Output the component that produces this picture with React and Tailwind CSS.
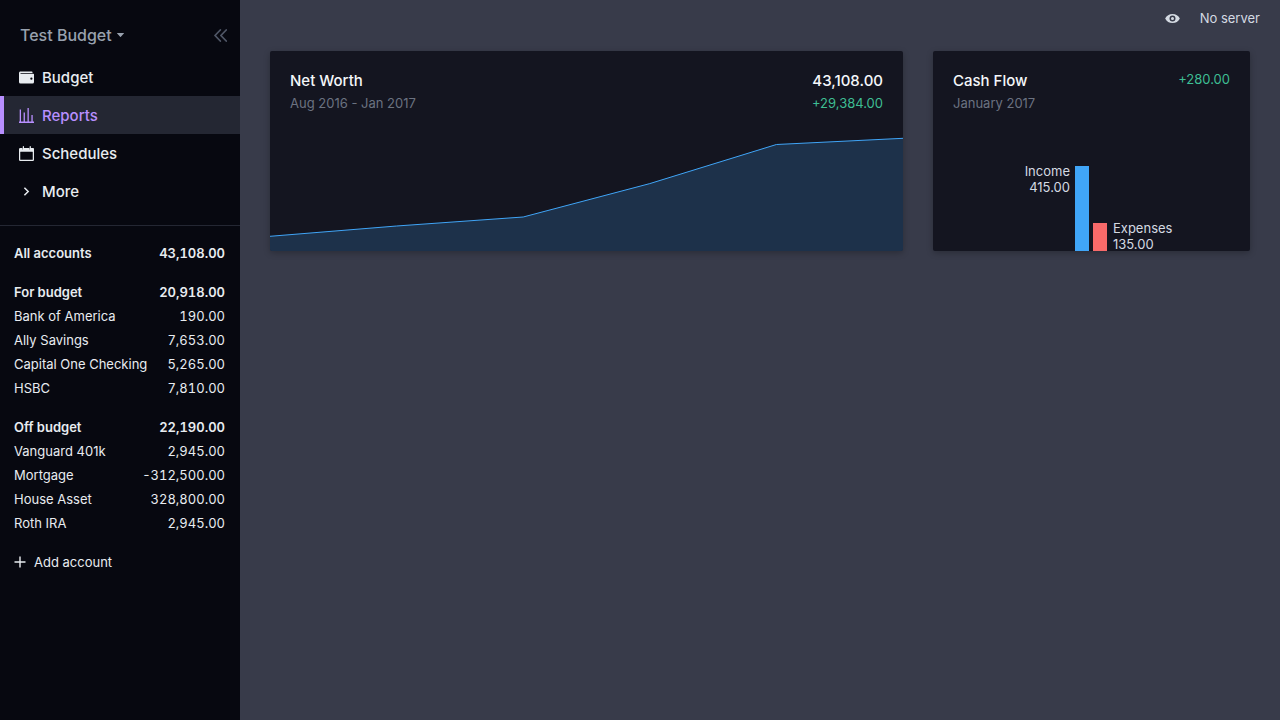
const navItems = [
  { label: 'Budget', icon: WalletIcon },
  { label: 'Reports', icon: ReportsIcon, active: true },
  { label: 'Schedules', icon: CalendarIcon },
  { label: 'More', icon: ChevronIcon },
];

const groups = [
  { name: 'All accounts', total: '43,108.00', accounts: [] },
  {
    name: 'For budget',
    total: '20,918.00',
    accounts: [
      ['Bank of America', '190.00'],
      ['Ally Savings', '7,653.00'],
      ['Capital One Checking', '5,265.00'],
      ['HSBC', '7,810.00'],
    ],
  },
  {
    name: 'Off budget',
    total: '22,190.00',
    accounts: [
      ['Vanguard 401k', '2,945.00'],
      ['Mortgage', '-312,500.00'],
      ['House Asset', '328,800.00'],
      ['Roth IRA', '2,945.00'],
    ],
  },
];

function WalletIcon() {
  return (
    <svg viewBox="0 0 20 20" className="size-[15px]" fill="currentColor">
      <path d="M0 4c0-1.1.9-2 2-2h15a1 1 0 0 1 1 1v1H2v1h17a1 1 0 0 1 1 1v10a2 2 0 0 1-2 2H2a2 2 0 0 1-2-2V4zm16.5 9a1.5 1.5 0 1 0 0-3 1.5 1.5 0 0 0 0 3z" />
    </svg>
  );
}

function ReportsIcon() {
  return (
    <svg viewBox="0 0 15 15" className="size-[15px]" fill="currentColor">
      <path d="M0 13.6h15V15H0zM.7 1.5H2V14H.7zM4.6 4.5h1.3V14H4.6zM8.5 0h1.3v14H8.5zM12.4 7h1.3v7h-1.3z" />
    </svg>
  );
}

function CalendarIcon() {
  return (
    <svg viewBox="0 0 24 24" className="size-[15px]" fill="currentColor">
      <path d="M22.5 3H19V1a1 1 0 0 0-2 0v4.7a.3.3 0 0 1-.5 0V3.500a.5.5 0 0 0-.5-.5H8V1a1 1 0 0 0-2 0v4.700a.3.3 0 0 1-.5 0V3.500A.5.5 0 0 0 5 3H2a2 2 0 0 0-2 2v17a2 2 0 0 0 2 2h20a2 2 0 0 0 2-2V4.500A1.500 1.500 0 0 0 22.500 3zM22 21.500a.5.5 0 0 1-.5.5h-19a.5.5 0 0 1-.5-.5v-12a.5.5 0 0 1 .5-.5h19a.5.5 0 0 1 .5.5z" />
    </svg>
  );
}

function ChevronIcon() {
  return (
    <svg viewBox="0 0 15 15" className="size-[15px]" fill="none" stroke="currentColor" strokeWidth="1.5">
      <path d="M5.400 3.700 9.200 7.500 5.400 11.300" />
    </svg>
  );
}

function NavItem({ label, icon: Icon, active }) {
  const tone = active
    ? 'border-[#b88fff] bg-[#242733] text-[#b88fff]'
    : 'border-transparent text-[#e8ecf0]';
  return (
    <a className={`flex h-[38px] items-center gap-2 border-l-4 pl-[15px] text-[15px] font-medium ${tone}`}>
      <Icon />
      <span className="pt-0.5">{label}</span>
    </a>
  );
}

function AccountRow({ name, value, bold }) {
  return (
    <div className={`flex h-6 items-center justify-between pt-0.5 pr-[15px] pl-3.5 ${bold ? 'font-semibold' : ''}`}>
      <span>{name}</span>
      <span className="tabular-nums">{value}</span>
    </div>
  );
}

function Sidebar() {
  return (
    <aside className="flex w-60 shrink-0 flex-col bg-[#070810] text-[#e8ecf0]">
      <div className="flex h-[58px] items-center pt-3 pr-[13px] pl-5 text-[#98a1ae]">
        <span className="text-base leading-none font-medium">Test Budget</span>
        <svg viewBox="0 0 7 4" className="ml-[5px] h-1 w-[7px]" fill="currentColor">
          <path d="M.4 0h6.200a.3.3 0 0 1 .2.600L3.900 3.800a.5.5 0 0 1-.8 0L.2.600A.3.3 0 0 1 .4 0z" />
        </svg>
        <svg viewBox="0 0 13 13" className="ml-auto size-[13px] text-[#4f5666]" fill="none" stroke="currentColor" strokeWidth="1.800" strokeLinecap="round" strokeLinejoin="round">
          <path d="M6.300 1 1 6.500l5.300 5.500M12.200 1 6.900 6.500l5.300 5.500" />
        </svg>
      </div>
      <nav className="flex flex-col">
        {navItems.map((item) => (
          <NavItem key={item.label} {...item} />
        ))}
      </nav>
      <div className="mt-[15px] h-px bg-[#242733]" />
      <div className="flex flex-col gap-[15px] pt-[15px]">
        {groups.map((group) => (
          <section key={group.name}>
            <AccountRow name={group.name} value={group.total} bold />
            {group.accounts.map(([name, value]) => (
              <AccountRow key={name} name={name} value={value} />
            ))}
          </section>
        ))}
        <button className="flex h-6 items-center gap-2 pl-3.5">
          <svg viewBox="0 0 12 12" className="size-3" stroke="currentColor" strokeWidth="1.400">
            <path d="M6 .5v11M.5 6h11" />
          </svg>
          <span className="pt-0.5">Add account</span>
        </button>
      </div>
    </aside>
  );
}

function CardHeader({ title, period, children }) {
  return (
    <div className="flex justify-between p-5">
      <div>
        <h2 className="pt-px text-[15px] leading-[18px] font-medium text-[#f5f7fa]">{title}</h2>
        <p className="mt-[5px] leading-4 text-[#6b7280]">{period}</p>
      </div>
      <div className="text-right">{children}</div>
    </div>
  );
}

function NetWorthCard() {
  return (
    <section className="flex h-[200px] w-[633px] flex-col overflow-hidden rounded-xs bg-[#141520] shadow-[0_2px_6px_rgba(0,0,0,0.25)]">
      <CardHeader title="Net Worth" period="Aug 2016 - Jan 2017">
        <p className="pt-px text-[15px] leading-[18px] font-medium text-[#f5f7fa]">43,108.00</p>
        <p className="mt-[5px] leading-4 text-[#3ebd93]">+29,384.00</p>
      </CardHeader>
      <svg viewBox="0 0 633 121" className="mt-auto h-[121px] w-[633px] shrink-0">
        <path d="M0 105.300 126.600 95 253.200 86 379.800 52.600 506.400 13.500 633 7.300V121H0z" fill="#40a5f7" fillOpacity=".2" />
        <path d="M0 105.300 126.600 95 253.200 86 379.800 52.600 506.400 13.500 633 7.300" fill="none" stroke="#40a5f7" />
      </svg>
    </section>
  );
}

function CashFlowCard() {
  return (
    <section className="flex h-[200px] w-[317px] flex-col overflow-hidden rounded-xs bg-[#141520] shadow-[0_2px_6px_rgba(0,0,0,0.25)]">
      <CardHeader title="Cash Flow" period="January 2017">
        <p className="leading-4 text-[#3ebd93]">+280.00</p>
      </CardHeader>
      <div className="mt-auto flex h-[85px] shrink-0 items-start pl-[91px] leading-4 text-[#d4dae2]">
        <div className="w-[46px] text-right whitespace-nowrap">
          <p className="-mt-[3px]">Income</p>
          <p>415.00</p>
        </div>
        <div className="ml-[5px] h-[85px] w-3.5 bg-[#40a5f7]" />
        <div className="ml-1 h-7 w-3.5 self-end bg-[#f86a6a]" />
        <div className="ml-1.5 h-[31px] self-end">
          <p>Expenses</p>
          <p>135.00</p>
        </div>
      </div>
    </section>
  );
}

export default function App() {
  return (
    <div className="flex h-screen w-full overflow-hidden bg-[#383b4a] font-['Inter',sans-serif] text-[13px]">
      <Sidebar />
      <main className="flex flex-1 flex-col">
        <header className="flex h-9 items-center justify-end gap-5 pr-5 text-[#d4dae2]">
          <svg viewBox="0 0 20 20" className="size-[15px]" fill="currentColor" fillRule="evenodd">
            <path d="M.2 10a11 11 0 0 1 19.600 0A11 11 0 0 1 .2 10zm9.800 4a4 4 0 1 0 0-8 4 4 0 0 0 0 8zm0-2a2 2 0 1 1 0-4 2 2 0 0 1 0 4z" />
          </svg>
          <span className="pt-0.5">No server</span>
        </header>
        <div className="flex gap-[30px] px-[30px] pt-[15px]">
          <NetWorthCard />
          <CashFlowCard />
        </div>
      </main>
    </div>
  );
}
